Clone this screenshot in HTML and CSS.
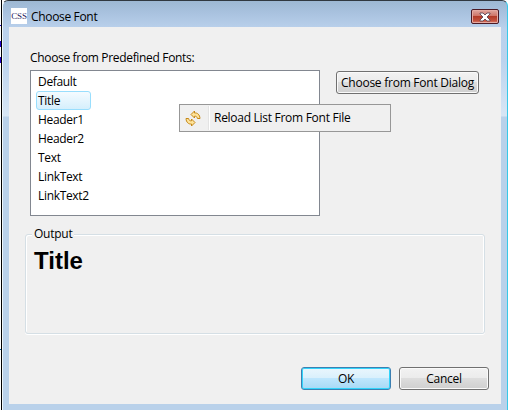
FILE: index.html
```html
<!DOCTYPE html>
<html lang="en">
<head>
<meta charset="utf-8">
<title>Choose Font</title>
<link rel="stylesheet" href="styles.css">
</head>
<body>
<div class="desktop">
  <i class="mark thin"></i><i class="mark"></i><i class="mark second"></i><i class="mark low"></i>
</div>
<main class="window">
  <header class="titlebar">
    <span class="app-icon"><span>CSS</span></span>
    <h1>Choose Font</h1>
    <button class="close" aria-label="Close">
      <svg width="12" height="10" viewBox="0 0 12 10"><path d="M1 1h3l2 2 2-2h3v1L8 5l3 3v1H8L6 7 4 9H1V8l3-3-3-3z" fill="#fff" stroke="#5c4858" stroke-width=".9"/></svg>
    </button>
  </header>
  <section class="client">
    <label class="caption">Choose from Predefined Fonts:</label>
    <div class="picker">
      <ul class="fonts">
        <li><span>Default</span></li>
        <li class="selected"><span>Title</span></li>
        <li><span>Header1</span></li>
        <li><span>Header2</span></li>
        <li><span>Text</span></li>
        <li><span>LinkText</span></li>
        <li><span>LinkText2</span></li>
      </ul>
      <button class="btn browse"><span>Choose from Font Dialog</span></button>
      <div class="menu">
        <svg width="16" height="18" viewBox="0 0 16 18" fill="#ffe49a" stroke="#c48718" stroke-width="1" stroke-linejoin="round"><path d="M6 5.5L9.5 2v2C12.5 3.6 14.8 5.8 15 9.5H12.4C12 7.6 11 7 9.5 7.2V9z"/><path d="M10 13.5L6.5 10v1.8C5 12 4 11.4 3.6 9.5H1C1.2 13.2 3.5 15.4 6.5 15v2z"/></svg>
        <span class="menu-text">Reload List From Font File</span>
      </div>
    </div>
    <fieldset class="output">
      <legend><span>Output</span></legend>
      <div class="sample">Title</div>
    </fieldset>
    <footer class="actions">
      <button class="btn ok"><span>OK</span></button>
      <button class="btn"><span>Cancel</span></button>
    </footer>
  </section>
</main>
</body>
</html>
```
FILE: styles.css
```css
* { box-sizing: border-box; }
body {
  margin: 0;
  width: 508px;
  height: 410px;
  overflow: hidden;
  display: flex;
  background: #fff;
  color: #000;
  font: 12px/16px "Open Sans", "Noto Sans", sans-serif;
  letter-spacing: -0.33px;
}
.desktop { width: 2px; border-right: 1px solid #000; }
.mark { display: block; width: 1px; height: 6px; background: #2200c8; margin-top: 15px; }
.mark.thin { height: 1px; margin-top: 25px; }
.mark.second { margin-top: 10px; }
.mark.low { height: 1px; margin-top: 286px; background: #0060a0; }
.window {
  width: 506px;
  height: 410px;
  padding: 0 6px 0 6px;
  border-left: 1px solid #eef7fc;
  border-right: 1px solid #38c8e8;
  border-top: 1px solid #303840;
  border-radius: 6px 6px 0 0;
  background: linear-gradient(#9db8d3 0, #a9c2df 12px, #bad1ec 28px, #bcd3ee 60px, #d7e6f5 115px, #b9d1ea 116px, #b9d1ea 100%);
}
.titlebar { height: 26px; display: flex; align-items: flex-start; padding: 7px 2px 0 2px; }
.app-icon {
  width: 16px; height: 16px; background: #fff; overflow: hidden;
  display: flex; align-items: center; justify-content: center;
  color: #282060; font: 9px/16px "Liberation Serif", serif; letter-spacing: -.2px;
}
h1 { margin: 1px 0 0 4px; font-size: 12px; line-height: 16px; font-weight: 400; flex: 1; }
.close {
  width: 28px; height: 15px; margin-top: 1px; padding: 0;
  display: flex; align-items: center; justify-content: center;
  border: 1px solid #4b1a25; border-radius: 2px;
  background: linear-gradient(#e0a79f, #cf7467 45%, #b33b28 50%, #c2503c 80%, #d97c6c);
  box-shadow: inset 0 0 0 1px #e5aaa2;
}
.client { height: 377px; background: #f0f0f0; padding: 23px 16px 0 16px; }
.caption { display: block; height: 20px; margin-left: 5px; }
.picker { position: relative; display: flex; align-items: flex-start; gap: 16px; margin-left: 5px; }
.fonts {
  width: 290px; height: 146px; margin: 0; padding: 1px 5px;
  list-style: none; border: 1px solid #828790; background: #fff;
}
.fonts li { width: 55px; height: 19px; padding: 0 1px; line-height: 17px; border: 1px solid transparent; border-radius: 3px; }
.fonts .selected { border-color: #99defd; background: linear-gradient(#f5fbff, #d5effc); }
.btn {
  width: 90px; height: 23px; padding: 0;
  border: 1px solid #707070; border-radius: 3px;
  background: linear-gradient(#f2f2f2, #ebebeb 48%, #dddddd 50%, #cfcfcf);
  box-shadow: inset 0 0 0 1px #fafafa;
  color: #000; font: inherit; letter-spacing: -0.25px; text-align: center;
}
.browse { width: 143px; margin-top: 1px; }
.ok {
  border-color: #3c7fb1;
  background: linear-gradient(#eaf6fd, #d9f0fc 48%, #bee6fd 50%, #a7d9f5);
  box-shadow: inset 0 0 0 1px #32d4fb;
}
.menu {
  position: absolute; left: 149px; top: 34px; width: 212px; height: 28px;
  display: flex; align-items: center; padding-left: 5px;
  border: 1px solid #979797; background: #f0f0f0;
}
.menu-text { margin-left: 8px; padding-left: 4px; line-height: 24px; border-left: 1px solid #fff; box-shadow: -1px 0 #e3e3e3; letter-spacing: -0.28px; }
.output {
  width: 460px; height: 108px; margin: 10px 0 0; padding: 0 8px; min-width: 0;
  border: 1px solid #d5dfe5; border-radius: 3px;
  box-shadow: inset 1px 1px #fff, inset -1px 0 #fff, 0 1px #fff;
}
.output legend { height: 16px; padding: 0 2px; margin-left: -2px; letter-spacing: -0.25px; background: #f0f0f0; }
.sample { margin-top: 5px; font: bold 24px/28px "Liberation Sans", Arial, sans-serif; letter-spacing: 0; }
.actions { display: flex; justify-content: flex-end; gap: 8px; margin: 33px -4px 0 0; }
```
